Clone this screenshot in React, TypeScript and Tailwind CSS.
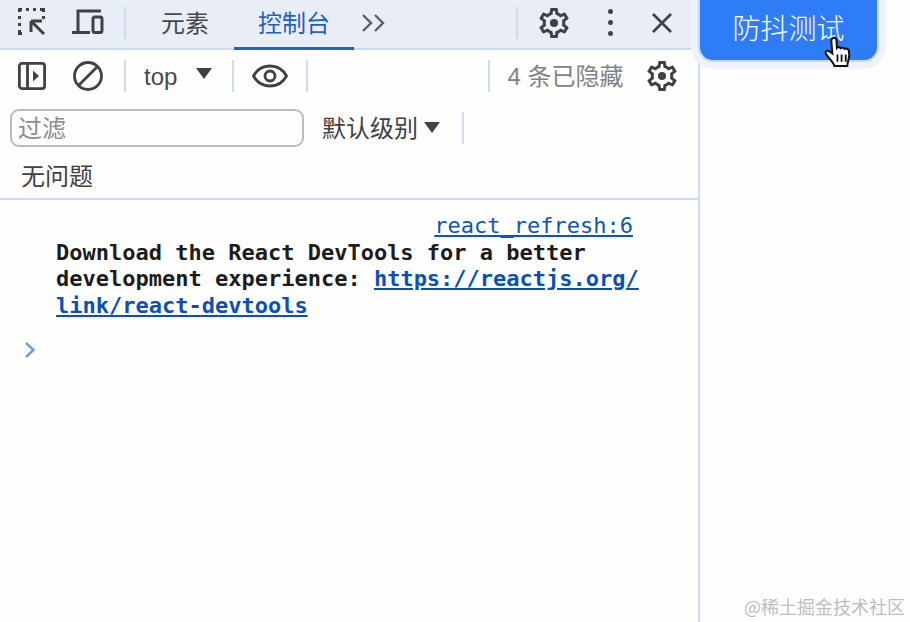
const cjk = { fontFamily: '"Liberation Sans", "Noto Sans CJK SC", sans-serif' };

function Sep({ className = "" }: { className?: string }) {
  return <div className={`w-[2px] h-[32px] shrink-0 bg-[#cbdcf3] ${className}`}></div>;
}

function Gear({ className = "" }: { className?: string }) {
  return (
    <svg viewBox="0 0 24 24" className={`w-[36px] h-[36px] shrink-0 ${className}`} fill="#3f4145">
      <path d="M19.43 12.98c.04-.32.07-.64.07-.98 0-.34-.03-.66-.07-.98l2.11-1.65c.19-.15.24-.42.12-.64l-2-3.46c-.09-.16-.26-.25-.44-.25-.06 0-.12.01-.17.03l-2.49 1c-.52-.4-1.08-.73-1.69-.98l-.38-2.65C14.46 2.18 14.25 2 14 2h-4c-.25 0-.46.18-.49.42l-.38 2.65c-.61.25-1.17.59-1.69.98l-2.49-1c-.06-.02-.12-.03-.18-.03-.17 0-.34.09-.43.25l-2 3.46c-.13.22-.07.49.12.64l2.11 1.65c-.04.32-.07.65-.07.98 0 .33.03.66.07.98l-2.11 1.65c-.19.15-.24.42-.12.64l2 3.46c.09.16.26.25.44.25.06 0 .12-.01.17-.03l2.49-1c.52.4 1.08.73 1.69.98l.38 2.65c.03.24.24.42.49.42h4c.25 0 .46-.18.49-.42l.38-2.65c.61-.25 1.17-.59 1.69-.98l2.49 1c.06.02.12.03.18.03.17 0 .34-.09.43-.25l2-3.46c.12-.22.07-.49-.12-.64l-2.11-1.65zm-1.98-1.71c.04.31.05.52.05.73 0 .21-.02.43-.05.73l-.14 1.13.89.7 1.08.84-.7 1.21-1.27-.51-1.04-.42-.9.68c-.43.32-.84.56-1.25.73l-1.06.43-.16 1.13-.2 1.35h-1.4l-.19-1.35-.16-1.13-1.06-.43c-.43-.18-.83-.41-1.23-.71l-.91-.7-1.06.43-1.27.51-.7-1.21 1.08-.84.89-.7-.14-1.13c-.03-.31-.05-.54-.05-.74s.02-.43.05-.73l.14-1.13-.89-.7-1.08-.84.7-1.21 1.27.51 1.04.42.9-.68c.43-.32.84-.56 1.25-.73l1.06-.43.16-1.13.2-1.35h1.39l.19 1.35.16 1.13 1.06.43c.43.18.83.41 1.23.71l.91.7 1.06-.43 1.27-.51.7 1.21-1.07.85-.89.7.14 1.13z" />
      <circle cx="12" cy="12" r="2.7" />
    </svg>
  );
}

function Caret({ className = "" }: { className?: string }) {
  return (
    <svg viewBox="0 0 16 11" className={`w-[16px] h-[11px] shrink-0 ${className}`} fill="#3f4145">
      <path d="M0 0h16L8 11z" />
    </svg>
  );
}

function MainToolbar() {
  return (
    <div className="h-[50px] shrink-0 flex items-center bg-[#e9edf5] border-b-2 border-[#c9dcf7] text-[#45484c]">
      {/* inspect */}
      <svg viewBox="0 0 28 28" className="w-[28px] h-[28px] ml-[18px] shrink-0 -mt-[4px]" fill="none" stroke="#3f4145" strokeWidth="3">
        <path d="M1.5 4V1.5H4M8 1.5h3M15 1.5h3M22 1.5h3.5V4M1.5 8v3M1.500 15v3M1.5 22v3.5H4M25.5 8v3" />
        <path d="M13 13h11M13 13v11M13.5 13.5L26 26" />
      </svg>
      {/* device */}
      <svg viewBox="0 0 32 26" className="w-[32px] h-[26px] ml-[26px] shrink-0 -mt-[4px]" fill="none" stroke="#3f4145" strokeWidth="3">
        <path d="M6 23V2h23" />
        <path d="M0 23.5h18" />
        <rect x="21" y="8" width="9" height="15.5" rx="2" />
      </svg>
      <Sep className="ml-[20px] -mt-[3px]" />
      <span className="ml-[35px] text-[24px] leading-none -mt-[1px]" style={cjk}>元素</span>
      <div className="relative ml-[25px] w-[120px] h-full flex items-center justify-center text-[#1f5fc4] text-[24px] leading-none" style={cjk}>
        <span className="-mt-[1px]">控制台</span>
        <div className="absolute left-0 right-0 bottom-[-2px] h-[3px] bg-[#2563c9]"></div>
      </div>
      <svg viewBox="0 0 24 18" className="w-[24px] h-[18px] ml-[8px] shrink-0 -mt-[3px]" fill="none" stroke="#5c5f64" strokeWidth="2.4">
        <path d="M1 1l8 8-8 8M13 1l8 8-8 8" />
      </svg>
      <Sep className="ml-[130px] -mt-[3px]" />
      <Gear className="ml-[18px] -mt-[3px]" />
      <div className="ml-[36px] flex flex-col gap-[6px] -mt-[3px]">
        <div className="w-[5px] h-[5px] rounded-full bg-[#3f4145]"></div>
        <div className="w-[5px] h-[5px] rounded-full bg-[#3f4145]"></div>
        <div className="w-[5px] h-[5px] rounded-full bg-[#3f4145]"></div>
      </div>
      <svg viewBox="0 0 20 20" className="w-[20px] h-[20px] ml-[39px] shrink-0 -mt-[3px]" fill="none" stroke="#3f4145" strokeWidth="2.6">
        <path d="M1 1l18 18M19 1L1 19" />
      </svg>
    </div>
  );
}

function ConsoleToolbar() {
  return (
    <div className="h-[50px] shrink-0 flex items-center pt-[3px] text-[#45484c]">
      {/* sidebar toggle */}
      <svg viewBox="0 0 28 28" className="w-[28px] h-[28px] ml-[18px] shrink-0 -mt-[1px]" fill="none" stroke="#3f4145" strokeWidth="2.8">
        <rect x="1.4" y="1.4" width="25.2" height="25.2" rx="2.5" />
        <path d="M9.5 1.5v25" />
        <path d="M15 8.5l6 5.5-6 5.5z" fill="#3f4145" stroke="none" />
      </svg>
      {/* clear */}
      <svg viewBox="0 0 30 30" className="w-[30px] h-[30px] ml-[27px] shrink-0 -mt-[1px]" fill="none" stroke="#3f4145" strokeWidth="2.8">
        <circle cx="15" cy="15" r="13.5" />
        <path d="M24.5 5.5l-19 19" />
      </svg>
      <Sep className="ml-[21px] -mt-[1px]" />
      <span className="ml-[18px] text-[24px] leading-none" style={cjk}>top</span>
      <Caret className="ml-[19px] -mt-[7px]" />
      <Sep className="ml-[20px] -mt-[1px]" />
      {/* eye */}
      <svg viewBox="0 0 36 24" className="w-[36px] h-[24px] ml-[18px] shrink-0 -mt-[1px]" fill="none" stroke="#3f4145" strokeWidth="2.8">
        <path d="M1.5 12C5 5.5 11 2 18 2s13 3.500 16.500 10C31 18.500 25 22 18 22S5 18.500 1.500 12z" />
        <circle cx="18" cy="12" r="5" />
      </svg>
      <Sep className="ml-[18px] -mt-[1px]" />
      <Sep className="ml-[180px] -mt-[1px]" />
      <span className="ml-[17px] text-[24px] leading-none text-[#808285] whitespace-nowrap" style={cjk}>4 条已隐藏</span>
      <Gear className="ml-[21px] -mt-[1px]" />
    </div>
  );
}

function FilterBar() {
  return (
    <div className="h-[55px] shrink-0 flex items-center text-[#3f4145]">
      <div className="ml-[10px] w-[294px] h-[38px] flex items-center border-2 border-[#b9bbbd] rounded-[9px] pl-[6px] pt-[3px] text-[24px] text-[#8b8d90]" style={cjk}>
        过滤
      </div>
      <span className="ml-[18px] text-[24px] leading-none whitespace-nowrap mt-[2px]" style={cjk}>默认级别</span>
      <Caret className="ml-[6px] -mt-[1px]" />
      <Sep className="ml-[22px]" />
    </div>
  );
}

function ConsoleOutput() {
  const mono = { fontFamily: '"DejaVu Sans Mono", monospace' };
  return (
    <div className="flex-1 pt-[13px] text-[22px] leading-[26.500px]" style={mono}>
      <div className="flex justify-end pr-[65px]">
        <span className="text-[#0b57b8] underline">react_refresh:6</span>
      </div>
      <div className="ml-[56px] w-[590px] font-bold text-[#1c1c1c]">
        <span>Download the React DevTools for a better development experience: </span>
        <span className="text-[#0b50b4] underline">
          https://reactjs.org/
          <wbr />
          link/react-devtools
        </span>
      </div>
      <svg viewBox="0 0 12 16" className="w-[12px] h-[16px] ml-[24px] mt-[23px]" fill="none" stroke="#6f9be0" strokeWidth="2.4">
        <path d="M2 1l7.500 7L2 15" />
      </svg>
    </div>
  );
}

function HandCursor() {
  return (
    <svg viewBox="0 0 30 32" className="absolute left-[123px] top-[48px] w-[31px] h-[33px]">
      <path
        d="M9 2.500c1.500-1.500 4-.5 4 1.500l.5 7.500c1-1 3-1 3.800.3 1-.8 3-.6 3.700.7 1.200-.7 3.500-.2 4 1.500.8 3 .5 7-.5 10-.5 1.500-1 3-1 5H11c-.5-2-2.500-4.500-5-7.500-1.500-1.800-4-4-3.500-6 .5-1.500 2.500-1.500 4-.5l2.500 2L8 5c0-1 .3-2 1-2.500z"
        fill="#ffffff"
        stroke="#111111"
        strokeWidth="2"
      />
      <path d="M14 18v7M18 18v7M22 18v7" stroke="#111111" strokeWidth="1.800" />
    </svg>
  );
}

export default function App() {
  return (
    <div className="w-[910px] h-[622px] overflow-hidden flex bg-[#fefefe]">
      <div className="relative z-10 w-[700px] shrink-0 h-full flex flex-col border-r-2 border-[#c9dcf7] bg-[#fefefe]">
        <MainToolbar />
        <ConsoleToolbar />
        <FilterBar />
        <div className="h-[45px] shrink-0 flex items-center border-b-2 border-[#c9dcf7] pl-[21px] pt-[1px] text-[24px] leading-none text-[#3f4145]" style={cjk}>
          无问题
        </div>
        <ConsoleOutput />
      </div>
      <div className="relative flex-1 flex flex-col">
        <div className="relative z-20 w-[177px] h-[72px] -mt-[12px] flex items-center justify-center pt-[12px] rounded-[13px] bg-[#2f7df6] text-white text-[28px] font-light shadow-[0_0_0_2px_#c3dafb,0_0_0_9px_#eef3fb]" style={cjk}>
          防抖测试
          <HandCursor />
        </div>
        <div className="mt-auto mb-[3px] mr-[5px] text-right text-[18px] leading-[26px] text-[#bdbdbd]" style={{ fontFamily: '"Noto Sans CJK SC", sans-serif' }}>
          @稀土掘金技术社区
        </div>
      </div>
    </div>
  );
}
